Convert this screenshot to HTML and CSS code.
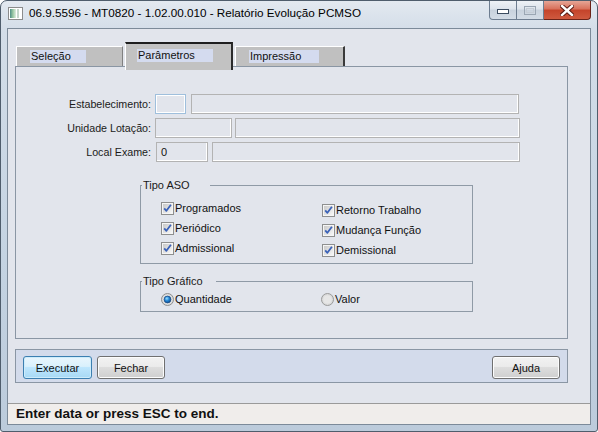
FILE: index.html
```html
<!DOCTYPE html>
<html lang="pt-BR">
<head>
    <meta charset="UTF-8">
    <meta name="viewport" content="width=device-width, initial-scale=1.0">
    <title>Relatório Evolução PCMSO</title>
    <link rel="stylesheet" href="styles.css">
</head>
<body>
    <!-- shared glyphs for the check boxes and radio buttons -->
    <svg class="defs" width="0" height="0" aria-hidden="true">
        <defs>
            <linearGradient id="box-fill" x1="0" y1="0" x2="1" y2="1">
                <stop offset="0" stop-color="#c9c9c9"/>
                <stop offset="1" stop-color="#f7f7f7"/>
            </linearGradient>
            <radialGradient id="ring-fill" cx="0.5" cy="0.5" r="0.6">
                <stop offset="0" stop-color="#f4f4f4"/>
                <stop offset="1" stop-color="#cfcfcf"/>
            </radialGradient>
            <radialGradient id="dot-fill" cx="0.4" cy="0.35" r="0.75">
                <stop offset="0" stop-color="#9be0ff"/>
                <stop offset="0.45" stop-color="#2386d6"/>
                <stop offset="1" stop-color="#0c3f7c"/>
            </radialGradient>
            <symbol id="check" viewBox="0 0 13 13">
                <rect x="0.5" y="0.5" width="12" height="12" fill="#f5f5f5" stroke="#8e8f8f"/>
                <rect x="2" y="2" width="9" height="9" fill="url(#box-fill)"/>
                <path d="M3.2 6.4 L5.4 8.8 L9.9 2.8" fill="none" stroke="#3b62b8" stroke-width="1.8" stroke-linejoin="round"/>
            </symbol>
            <symbol id="radio-on" viewBox="0 0 13 13">
                <circle cx="6.5" cy="6.5" r="6" fill="url(#ring-fill)" stroke="#8e8f8f"/>
                <circle cx="6.5" cy="6.5" r="3.4" fill="url(#dot-fill)" stroke="#1d4d86" stroke-width="0.8"/>
            </symbol>
            <symbol id="radio-off" viewBox="0 0 13 13">
                <circle cx="6.5" cy="6.5" r="6" fill="url(#ring-fill)" stroke="#9a9b9b"/>
                <circle cx="6.5" cy="6.5" r="4" fill="#e6e6e6"/>
            </symbol>
        </defs>
    </svg>

    <div class="window">
        <div class="titlebar">
            <svg class="app-icon" width="15" height="13" viewBox="0 0 15 13">
                <defs>
                    <linearGradient id="icon-fill" x1="0" y1="0" x2="1" y2="0">
                        <stop offset="0" stop-color="#4f8f86"/>
                        <stop offset="0.5" stop-color="#9cc9a4"/>
                        <stop offset="1" stop-color="#dfeee2"/>
                    </linearGradient>
                </defs>
                <rect x="0.5" y="0.5" width="14" height="12" fill="#fff" stroke="#8c8c8c"/>
                <rect x="2" y="2" width="6" height="9" fill="url(#icon-fill)"/>
                <rect x="9" y="2" width="2" height="9" fill="#c6d7cc"/>
            </svg>
            <span class="title">06.9.5596 - MT0820 - 1.02.00.010 - Relatório Evolução PCMSO</span>
            <div class="controls">
                <span class="ctl ctl-min">
                    <svg width="12" height="5" viewBox="0 0 12 5"><rect x="0.5" y="0.5" width="11" height="4" fill="#fff" stroke="#3b4c60"/></svg>
                </span>
                <span class="ctl ctl-max">
                    <svg width="12" height="9" viewBox="0 0 12 9"><rect x="0.5" y="0.5" width="11" height="8" fill="none" stroke="#9aa6b3"/><rect x="2.5" y="2.5" width="7" height="4" fill="none" stroke="#c4ccd5"/></svg>
                </span>
                <span class="ctl ctl-close">
                    <svg width="14" height="11" viewBox="0 0 14 11"><path d="M2 1 L12 10 M12 1 L2 10" stroke="#5a1a12" stroke-width="4.4" stroke-linecap="square"/><path d="M2 1 L12 10 M12 1 L2 10" stroke="#fff" stroke-width="2.4" stroke-linecap="square"/></svg>
                </span>
            </div>
        </div>

        <div class="client">
            <div class="tabs">
                <div class="tab"><span class="tab-label">Seleção</span></div>
                <div class="tab active"><span class="tab-label">Parâmetros</span></div>
                <div class="tab last"><span class="tab-label">Impressão</span></div>
            </div>

            <div class="panel">
                <div class="fields">
                    <div class="row">
                        <label>Estabelecimento:</label>
                        <span class="input focus" style="width: 31px"></span>
                        <span class="input gap5" style="width: 328px"></span>
                    </div>
                    <div class="row">
                        <label>Unidade Lotação:</label>
                        <span class="input" style="width: 77px"></span>
                        <span class="input gap3" style="width: 285px"></span>
                    </div>
                    <div class="row">
                        <label>Local Exame:</label>
                        <span class="input shift" style="width: 52px">0</span>
                        <span class="input gap4" style="width: 308px"></span>
                    </div>
                </div>

                <fieldset class="group group-aso">
                    <legend>Tipo ASO</legend>
                    <div class="checks">
                        <div class="col">
                            <div class="opt"><svg class="mark"><use href="#check"/></svg>Programados</div>
                            <div class="opt"><svg class="mark"><use href="#check"/></svg>Periódico</div>
                            <div class="opt"><svg class="mark"><use href="#check"/></svg>Admissional</div>
                        </div>
                        <div class="col col-right">
                            <div class="opt"><svg class="mark"><use href="#check"/></svg>Retorno Trabalho</div>
                            <div class="opt"><svg class="mark"><use href="#check"/></svg>Mudança Função</div>
                            <div class="opt"><svg class="mark"><use href="#check"/></svg>Demissional</div>
                        </div>
                    </div>
                </fieldset>

                <fieldset class="group group-grafico">
                    <legend>Tipo Gráfico</legend>
                    <div class="radios">
                        <div class="opt"><svg class="mark"><use href="#radio-on"/></svg>Quantidade</div>
                        <div class="opt"><svg class="mark"><use href="#radio-off"/></svg>Valor</div>
                    </div>
                </fieldset>
            </div>

            <div class="buttonbar">
                <button class="btn default">Executar</button>
                <button class="btn">Fechar</button>
                <button class="btn help">Ajuda</button>
            </div>

            <div class="statusbar">Enter data or press ESC to end.</div>
        </div>
    </div>
</body>
</html>
```

FILE: styles.css
```css
* {
    margin: 0;
    padding: 0;
    box-sizing: border-box;
}
body {
    width: 598px;
    height: 432px;
    overflow: hidden;
    background: #fff;
    font-family: "Liberation Sans", Arial, sans-serif;
    font-size: 11px;
    color: #111;
}
.defs {
    position: absolute;
    width: 0;
    height: 0;
}

/* Window frame */
.window {
    width: 598px;
    height: 432px;
    display: flex;
    flex-direction: column;
    padding: 0 6px 6px 6px;
    border: 1px solid #4f5d6c;
    border-radius: 7px 7px 3px 3px;
    background: linear-gradient(to bottom, #e3e9f0, #d3dde8 30px, #c4d3e2 60%, #bccbdb);
}
.titlebar {
    height: 27px;
    display: flex;
    align-items: flex-start;
}
.app-icon {
    margin: 6px 0 0 1px;
}
.title {
    margin: 5px 0 0 6px;
    font-size: 11.7px;
    color: #000;
    white-space: nowrap;
}
.controls {
    margin-left: auto;
    display: flex;
    height: 19px;
}
.ctl {
    display: flex;
    align-items: center;
    justify-content: center;
    height: 19px;
    border: 1px solid #6d7d90;
    border-top: none;
    background: linear-gradient(to bottom, #eef2f6, #dde4ec 45%, #c8d2dd 50%, #d3dce6);
}
.ctl-min {
    width: 28px;
    border-radius: 0 0 0 4px;
    padding-top: 3px;
}
.ctl-max {
    width: 27px;
    border-left: none;
}
.ctl-close {
    width: 47px;
    border-left: none;
    border-color: #6b2318;
    border-radius: 0 0 4px 0;
    background: linear-gradient(to bottom, #e6a596, #d8705a 45%, #c4432a 50%, #cf5a3f);
}

/* Client area */
.client {
    flex: 1;
    display: flex;
    flex-direction: column;
    border: 1px solid #7c8a99;
    background: #e2e5ec;
}
.tabs {
    display: flex;
    align-items: flex-start;
    height: 24px;
    margin: 13px 0 0 8px;
}
.tab {
    width: 107px;
    height: 20px;
    margin: 4px 2px 0 0;
    padding: 3px 0 0 13px;
    background: #c0c0c0;
    border-top: 1px solid #fff;
    border-left: 1px solid #fff;
    border-right: 1px solid #808080;
}
.tab.active {
    position: relative;
    z-index: 1;
    width: 108px;
    height: 28px;
    margin-top: 0;
    padding: 5px 0 0 11px;
    border-top: 2px solid #1e1e1e;
    border-right: 2px solid #2a2a2a;
    background: #c2c2c2;
}
.tab.last {
    width: 110px;
    border-right: 2px solid #3a3a3a;
}
.tab-label {
    display: block;
    height: 13px;
    padding-left: 1px;
    line-height: 13px;
    background: #d4dbef;
}
.tab .tab-label { width: 56px; }
.tab.active .tab-label { width: 76px; }
.tab.last .tab-label { width: 70px; }

.panel {
    width: 553px;
    height: 273px;
    margin-left: 7px;
    border: 1px solid #8a96a4;
    padding-top: 27px;
}
.fields {
    display: flex;
    flex-direction: column;
    gap: 4px;
}
.row {
    display: flex;
    align-items: center;
    height: 20px;
}
.row label {
    width: 135px;
    margin-right: 4px;
    text-align: right;
    font-size: 10.7px;
    color: #1a1a1a;
}
.input {
    height: 20px;
    padding-left: 4px;
    line-height: 18px;
    border: 1px solid #b3b3b3;
    box-shadow: inset -1px -1px 0 #fff;
}
.input.focus {
    border-color: #9fbfdc;
    box-shadow: inset 1px 1px 0 #fff, inset -1px -1px 0 #fff;
}
.gap3 { margin-left: 3px; }
.gap4 { margin-left: 4px; }
.gap5 { margin-left: 5px; }
.shift { margin-left: 1px; }

/* Group boxes */
.group {
    width: 333px;
    margin-left: 124px;
    border: 1px solid #8f9aa6;
}
.group legend {
    margin-left: 1px;
    padding-left: 1px;
    line-height: 14px;
    color: #1a1a1a;
}
.group-aso {
    margin-top: 16px;
    height: 86px;
}
.group-aso legend { width: 68px; }
.group-grafico {
    margin-top: 11px;
    height: 37px;
}
.group-grafico legend {
    width: 74px;
    line-height: 12px;
}

.checks {
    display: grid;
    grid-template-columns: 161px auto;
    padding: 6px 0 0 20px;
}
.col-right {
    margin-top: 2px;
}
.opt {
    display: flex;
    align-items: center;
    height: 20px;
    white-space: nowrap;
}
.mark {
    width: 13px;
    height: 13px;
    margin-right: 1px;
}
.radios {
    display: grid;
    grid-template-columns: 160px auto;
    padding: 2px 0 0 20px;
}

/* Bottom button bar */
.buttonbar {
    display: flex;
    align-items: flex-start;
    gap: 5px;
    width: 553px;
    height: 34px;
    margin: 10px 0 0 7px;
    padding: 6px 7px 0 7px;
    background: #d3dbeb;
    border: 1px solid #8a96a4;
}
.btn {
    width: 68px;
    height: 23px;
    font-family: "Liberation Sans", Arial, sans-serif;
    font-size: 11px;
    color: #111;
    border: 1px solid #707070;
    border-radius: 3px;
    background: linear-gradient(to bottom, #f2f2f2, #ebebeb 45%, #dddddd 50%, #cfcfcf);
    box-shadow: inset 0 0 0 1px #fcfcfc;
}
.btn.default {
    width: 69px;
    border-color: #3c7fb1;
    background: linear-gradient(to bottom, #eaf6fd, #d9f0fc 45%, #bee6fd 50%, #a7d9f5);
    box-shadow: inset 0 0 0 1px #cdecfb;
}
.btn.help {
    margin-left: auto;
}

.statusbar {
    margin-top: auto;
    height: 21px;
    padding-left: 8px;
    line-height: 20px;
    border-top: 1px solid #9a9a9a;
    background: #f0edeb;
    font-weight: bold;
    font-size: 13.5px;
    color: #111;
}
```
